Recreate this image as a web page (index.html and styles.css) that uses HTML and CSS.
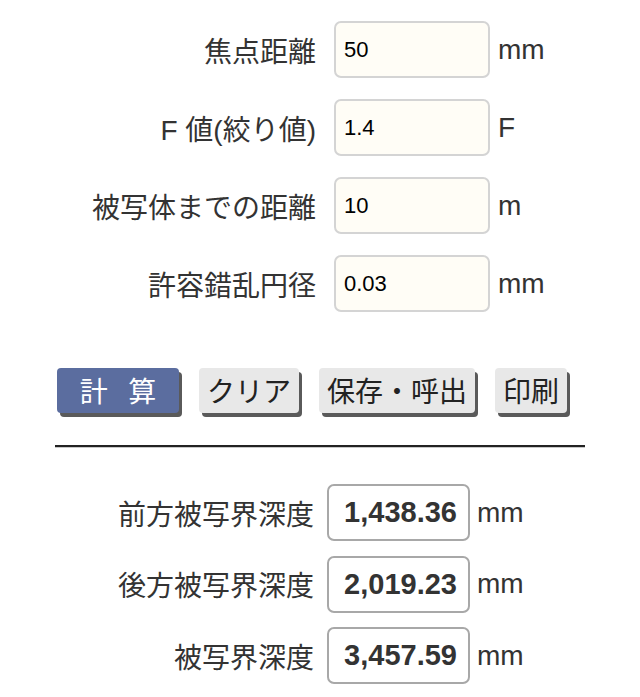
FILE: index.html
```html
<!DOCTYPE html>
<html lang="ja">

<head>
  <meta charset="utf-8">
  <title>被写界深度計算</title>
  <link rel="stylesheet" href="styles.css">
</head>

<body>
  <div class="container">
    <!-- 入力欄 -->
    <div class="input-grid">
      <label class="label" for="input-focal">焦点距離</label>
      <input type="text" id="input-focal" class="field" value="50">
      <span class="unit">mm</span>

      <label class="label" for="input-f">F 値(絞り値)</label>
      <input type="text" id="input-f" class="field" value="1.4">
      <span class="unit">F</span>

      <label class="label" for="input-distance">被写体までの距離</label>
      <input type="text" id="input-distance" class="field" value="10">
      <span class="unit">m</span>

      <label class="label" for="input-coc">許容錯乱円径</label>
      <input type="text" id="input-coc" class="field" value="0.03">
      <span class="unit">mm</span>
    </div>

    <!-- ボタン -->
    <div class="button-row">
      <button class="btn btn-calc">計 算</button>
      <button class="btn">クリア</button>
      <button class="btn">保存・呼出</button>
      <button class="btn">印刷</button>
    </div>

    <hr class="divider">

    <!-- 結果 -->
    <div class="result-grid">
      <span class="label">前方被写界深度</span>
      <span class="result" id="result-front">1,438.36</span>
      <span class="unit">mm</span>

      <span class="label">後方被写界深度</span>
      <span class="result" id="result-back">2,019.23</span>
      <span class="unit">mm</span>

      <span class="label">被写界深度</span>
      <span class="result" id="result-total">3,457.59</span>
      <span class="unit">mm</span>
    </div>
  </div>
</body>

</html>
```

FILE: styles.css
```css
body {
  margin: 0;
  background-color: #fff;
  color: #333;
  font-family: "Liberation Sans", "Noto Sans CJK JP", sans-serif;
}

.container {
  width: 640px;
  padding-top: 21px;
}

/* 入力欄 */
.input-grid {
  display: grid;
  grid-template-columns: 334px 156px 1fr;
  grid-auto-rows: 57px;
  row-gap: 21px;
  align-items: center;
}

.label {
  font-size: 28px;
  text-align: right;
  white-space: nowrap;
}

.input-grid .label {
  padding-right: 18px;
}

.field {
  box-sizing: border-box;
  width: 156px;
  height: 57px;
  margin: 0;
  padding: 0 8px;
  border: 2px solid #d4d4d4;
  border-radius: 7px;
  background-color: #fffdf6;
  font-family: "Liberation Sans", sans-serif;
  font-size: 22px;
  color: #000;
  outline: none;
}

.unit {
  font-size: 28px;
  padding-left: 8px;
}

/* ボタン */
.button-row {
  display: flex;
  gap: 20px;
  margin-top: 56px;
  padding-left: 57px;
}

.btn {
  height: 45px;
  padding: 0 8px;
  border: none;
  border-radius: 4px;
  background-color: #e8e8e8;
  color: #222;
  font-family: "Noto Sans CJK JP", sans-serif;
  font-size: 28px;
  line-height: 45px;
  box-shadow: 3px 4px 0 #5a5a5a;
}

.btn-calc {
  width: 122px;
  background-color: #5b6d9f;
  color: #fff;
  word-spacing: 14px;
}

.divider {
  width: 530px;
  margin: 32px 0 0 55px;
  border: none;
  border-top: 2px solid #222;
  box-shadow: 0 1px 0 #c8c8c8;
}

/* 結果 */
.result-grid {
  display: grid;
  grid-template-columns: 327px 143px 1fr;
  grid-auto-rows: 57px;
  row-gap: 14.5px;
  align-items: center;
  margin-top: 37px;
}

.result-grid .label {
  padding-right: 13px;
}

.result {
  box-sizing: border-box;
  height: 57px;
  padding-right: 11px;
  border: 2px solid #a8a8a8;
  border-radius: 7px;
  background-color: #fff;
  font-size: 29px;
  font-weight: bold;
  line-height: 53px;
  text-align: right;
  color: #333;
}

.result-grid .unit {
  padding-left: 7px;
}
```
